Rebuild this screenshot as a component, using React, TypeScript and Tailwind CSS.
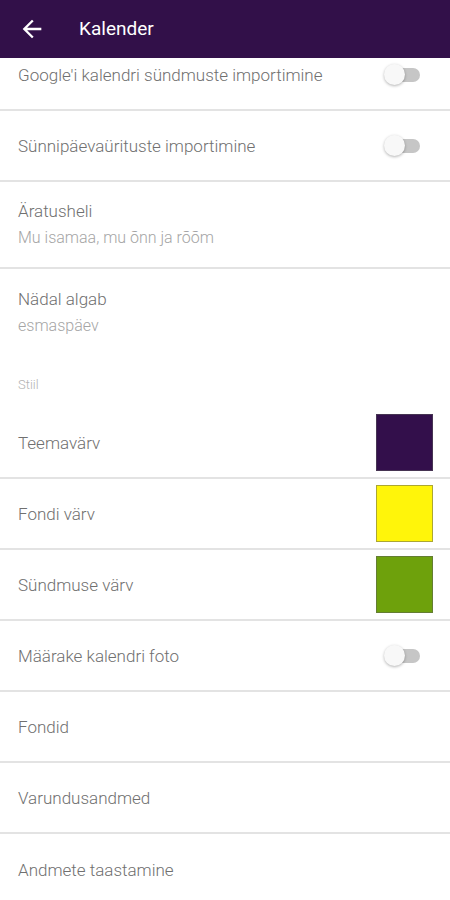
import React from "react";

const font = { fontFamily: "Roboto, 'Noto Sans', sans-serif" };

function Toggle() {
  return (
    <div className="relative w-[36px] h-[22px] shrink-0 mr-[12px]">
      <div className="absolute left-[2px] top-[4px] w-[34px] h-[14px] rounded-full bg-[#c6c6c6]" />
      <div className="absolute left-0 top-0 w-[21px] h-[21px] rounded-full bg-[#f8f8f8] shadow-[0_1px_3px_rgba(0,0,0,0.3)]" />
    </div>
  );
}

function Swatch({ color }: { color: string }) {
  return (
    <div
      className="w-[57px] h-[57px] border border-[#5a5a5a]/50 shrink-0 mr-[-1px]"
      style={{ backgroundColor: color }}
    />
  );
}

function Row({
  title,
  summary,
  right,
  border = true,
  tall = false,
  className = "",
}: {
  title: string;
  summary?: string;
  right?: React.ReactNode;
  border?: boolean;
  tall?: boolean;
  className?: string;
}) {
  return (
    <div
      className={`flex items-center justify-between pl-[18px] pr-[18px] ${
        tall ? "h-[87px]" : "h-[71px]"
      } ${border ? "border-b-2 border-[#e3e3e3]" : ""} ${className}`}
    >
      <div className="flex flex-col">
        <div className="text-[17px] leading-[22px] font-light text-[#707070]">{title}</div>
        {summary && (
          <div className="text-[16px] leading-[22px] font-light text-[#a5a5a5] mt-[5px]">{summary}</div>
        )}
      </div>
      {right}
    </div>
  );
}

export default function App() {
  return (
    <div className="w-[450px] h-[900px] bg-white overflow-hidden flex flex-col" style={font}>
      <div className="h-[58px] shrink-0 bg-[#321049] flex items-center relative z-10">
        <svg width="28" height="28" viewBox="0 0 24 24" className="ml-[18px]" fill="#ffffff">
          <path d="M20 11H7.83l5.59-5.59L12 4l-8 8 8 8 1.41-1.41L7.83 13H20v-2z" />
        </svg>
        <div className="ml-[33px] text-[19px] text-white font-normal">Kalender</div>
      </div>
      <div className="flex-1 overflow-hidden">
        <Row
          className="-mt-[18px]"
          title="Google'i kalendri sündmuste importimine"
          right={<Toggle />}
        />
        <Row title="Sünnipäevaürituste importimine" right={<Toggle />} />
        <Row title="Äratusheli" summary="Mu isamaa, mu õnn ja rõõm" tall />
        <Row title="Nädal algab" summary="esmaspäev" tall border={false} />
        <div className="h-[52px] pl-[18px] pt-[21px] text-[13px] leading-[16px] font-light text-[#b3b3b3]">
          Stiil
        </div>
        <Row title="Teemavärv" right={<Swatch color="#330f4b" />} />
        <Row title="Fondi värv" right={<Swatch color="#fff50a" />} />
        <Row title="Sündmuse värv" right={<Swatch color="#6ea10c" />} />
        <Row title="Määrake kalendri foto" right={<Toggle />} />
        <Row title="Fondid" />
        <Row title="Varundusandmed" />
        <Row title="Andmete taastamine" border={false} />
      </div>
    </div>
  );
}
